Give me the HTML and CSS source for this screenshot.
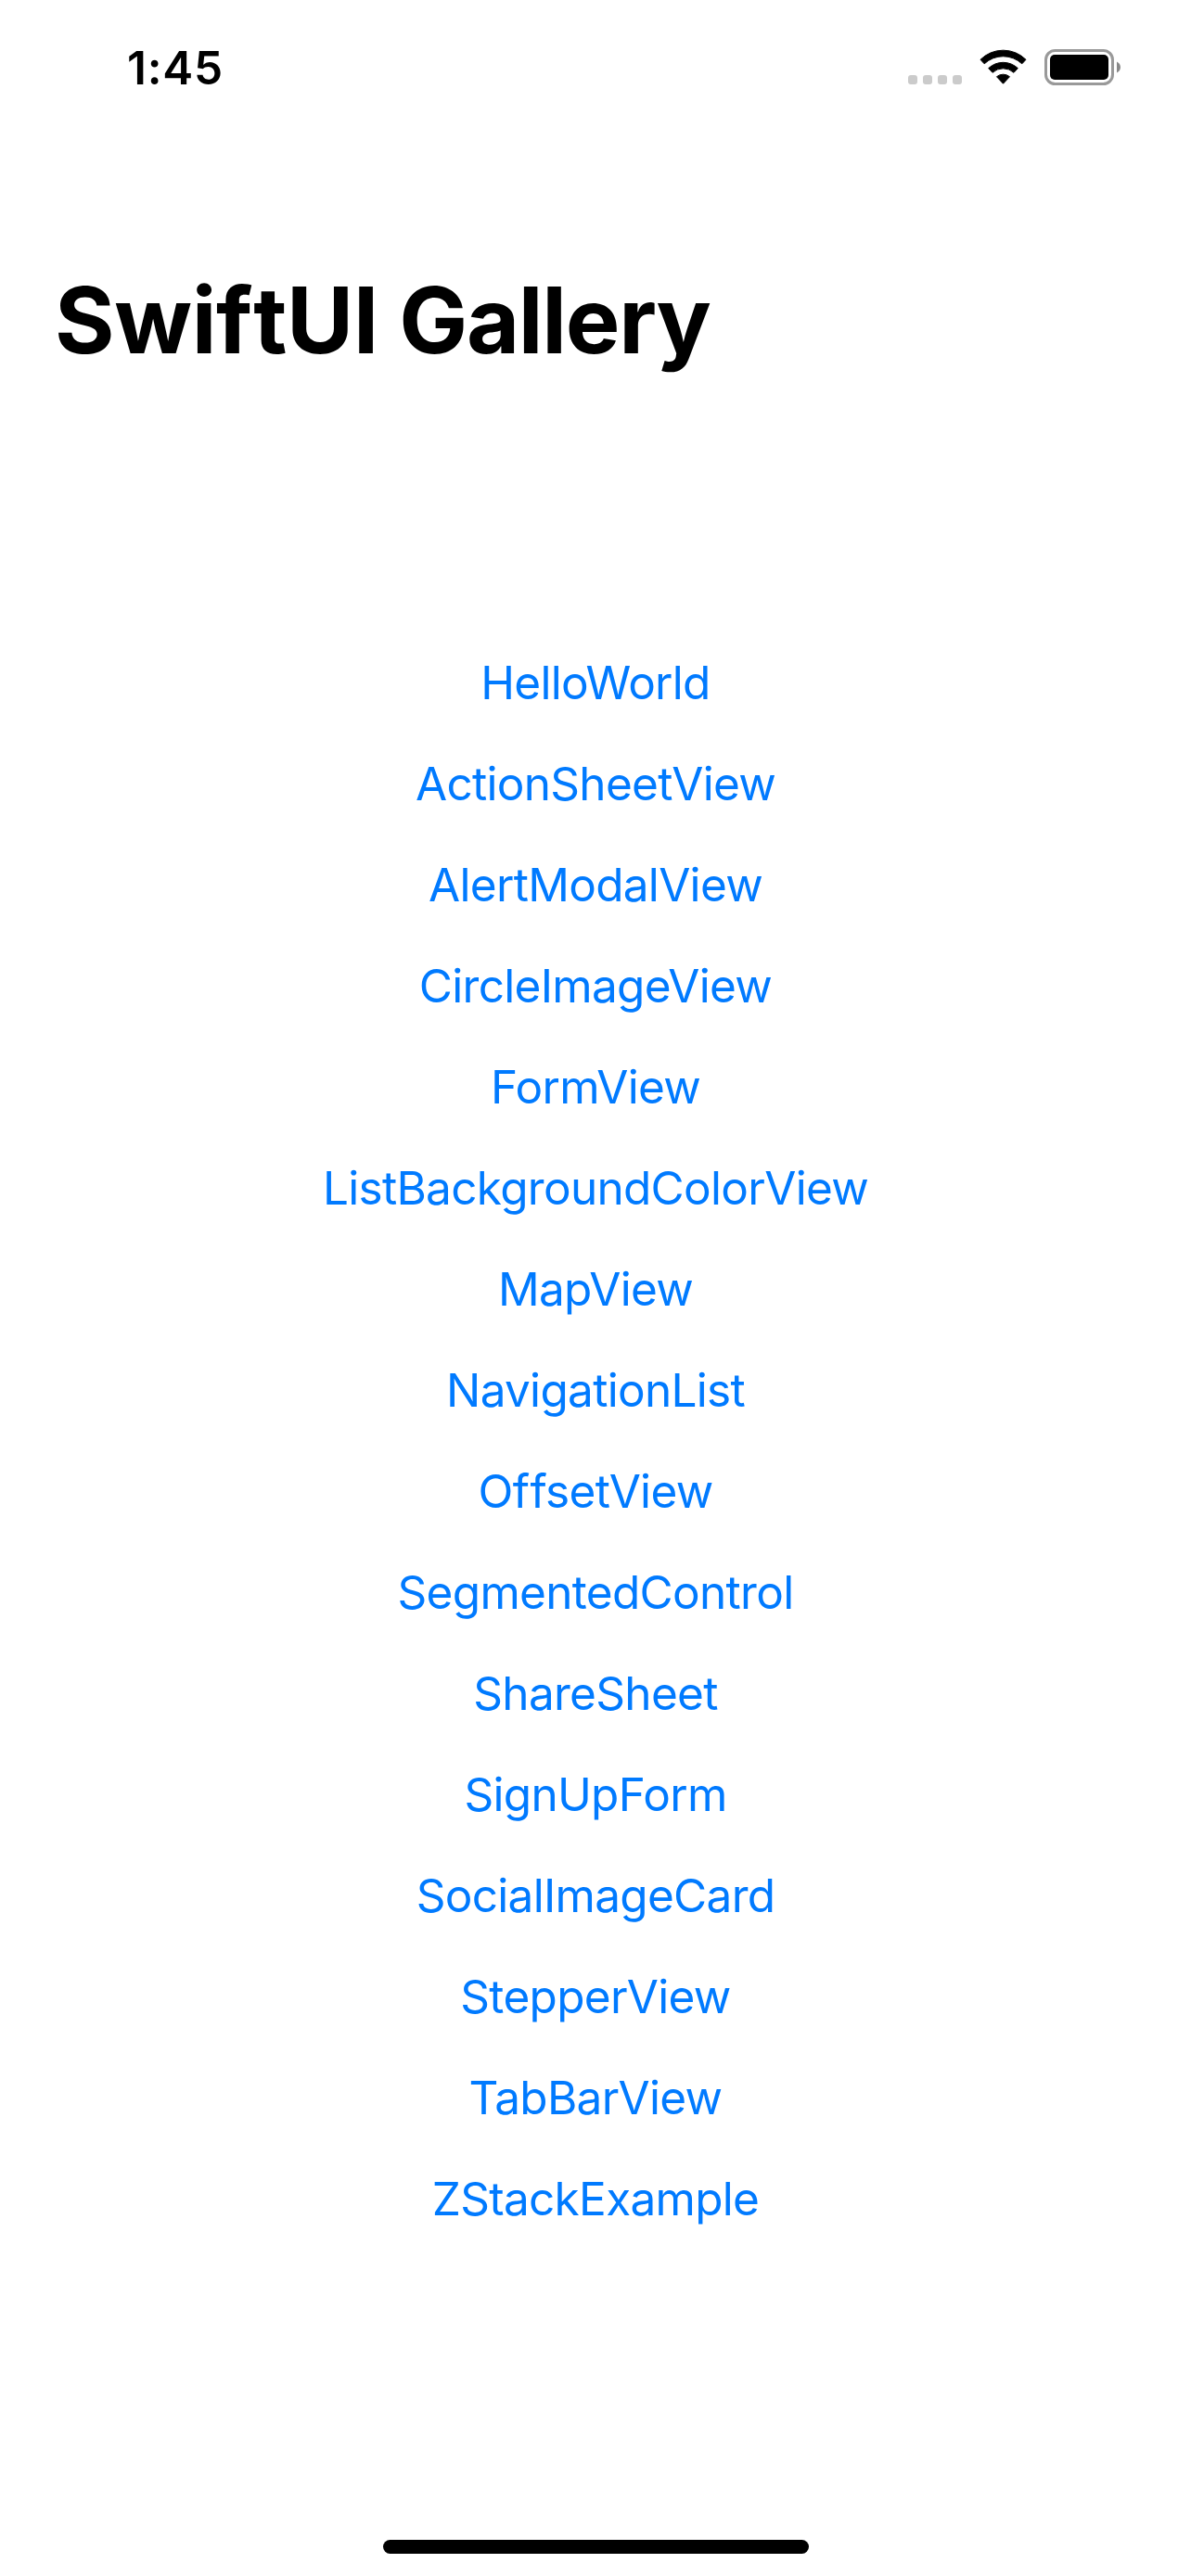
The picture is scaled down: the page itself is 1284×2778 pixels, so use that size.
FILE: index.html
```html
<!DOCTYPE html>
<html lang="en">
<head>
<meta charset="utf-8">
<title>SwiftUI Gallery</title>
<link rel="stylesheet" href="styles.css">
</head>
<body>
<header class="status">
<span class="time">1:45</span>
<svg class="indicators" width="230" height="44" viewBox="0 0 230 44">
<g fill="#cbcbcb"><rect x="0" y="31" width="10" height="10" rx="3"/><rect x="16" y="31" width="10" height="10" rx="3"/><rect x="32" y="31" width="10" height="10" rx="3"/><rect x="48" y="31" width="10" height="10" rx="3"/></g>
<g stroke="#000" stroke-width="1" stroke-linejoin="round">
<path d="M78 14.3A34.7 34.7 0 0 1 127 14.3L122.8 18.8A29.7 29.7 0 0 0 82.2 18.8Z"/>
<path d="M86.7 23.6A23 23 0 0 1 118.3 23.6L114 28.3A17 17 0 0 0 91 28.3Z"/>
<path d="M95.5 32.7A11 11 0 0 1 109.5 32.7L102.5 40.2Z"/>
</g>
<rect x="148.5" y="4.5" width="72" height="36" rx="10" fill="none" stroke="#999" stroke-width="3"/>
<rect x="153" y="9" width="63" height="27" rx="5"/>
<path d="M225 16.5C230.3 19 230.3 26 225 28.5Z" fill="#888"/>
</svg>
</header>
<h1 class="title"><span class="product">Swi<span class="loose">f</span>tUI</span> Gallery</h1>
<nav class="links">
<a>HelloWorld</a>
<a>ActionSheetView</a>
<a>AlertModalView</a>
<a>CircleImageView</a>
<a>FormView</a>
<a>ListBackgroundColorView</a>
<a>MapView</a>
<a>NavigationList</a>
<a>O<span class="loose">f</span>fsetView</a>
<a>SegmentedControl</a>
<a>ShareSheet</a>
<a>SignUpForm</a>
<a>SocialImageCard</a>
<a>StepperView</a>
<a>TabBarView</a>
<a>ZStackExample</a>
</nav>
<div class="home"></div>
</body>
</html>
```
FILE: styles.css
```css
* { box-sizing: border-box; margin: 0; }
body { height: 2778px; background: #fff; font-family: Inter, sans-serif; display: flex; flex-direction: column; align-items: center; }
.status { width: 100%; height: 141px; padding: 43px 75px 0 137px; display: flex; justify-content: space-between; }
.time { font-size: 49.5px; line-height: 60px; font-weight: 600; letter-spacing: 0.8px; }
.indicators { margin-top: 7px; }
.title { width: 100%; padding: 143px 0 0 59px; font-size: 98.6px; line-height: 122px; font-weight: 700; letter-spacing: -1.3px; }
.product { letter-spacing: -0.35px; }
.loose { letter-spacing: 0.01em; }
.links { margin-top: 275.5px; display: flex; flex-direction: column; align-items: center; color: #007aff; font-size: 49.5px; line-height: 109px; letter-spacing: -0.7px; }
.home { width: 459px; height: 15px; border-radius: 8px; background: #000; margin-top: auto; margin-bottom: 24px; }
```
